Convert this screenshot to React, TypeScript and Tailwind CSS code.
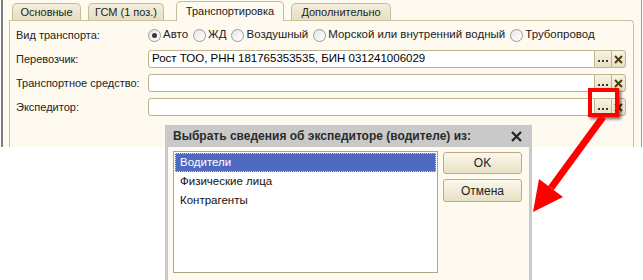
import { ReactNode } from "react";

type FieldProps = { value?: string };

function Radio({ label, checked }: { label: string; checked?: boolean }) {
  return (
    <div className="flex items-center mr-[5px] whitespace-nowrap text-[11.5px]">
      <span className="w-[13px] h-[13px] rounded-full border border-[#9a9a9a] bg-gradient-to-br from-[#e6e6e6] to-white flex items-center justify-center mr-[2px]">
        {checked && <span className="w-[5px] h-[5px] rounded-full bg-[#3a3a3a]" />}
      </span>
      <span>{label}</span>
    </div>
  );
}

function Dots() {
  return (
    <svg width="11" height="3" viewBox="0 0 11 3">
      <rect x="0" y="0" width="2" height="2" fill="#3d3a1a" />
      <rect x="4" y="0" width="2" height="2" fill="#3d3a1a" />
      <rect x="8" y="0" width="2" height="2" fill="#3d3a1a" />
    </svg>
  );
}

function Field({ value }: FieldProps) {
  return (
    <div className="flex h-[18px] w-[478px]">
      <div className="flex-1 bg-white border border-[#bdb48f] rounded-l-[3px] pl-[3px] flex items-center text-[11.5px] text-black leading-none whitespace-nowrap">
        {value}
      </div>
      <div className="w-[16px] border-y border-[#bdb48f] bg-gradient-to-b from-[#f7f3e3] to-[#e8e0c2] flex items-end justify-center pb-[4px]">
        <Dots />
      </div>
      <div className="w-[15px] border border-[#bdb48f] rounded-r-[3px] bg-gradient-to-b from-[#f7f3e3] to-[#e8e0c2] flex items-center justify-center">
        <svg width="9" height="9" viewBox="0 0 9 9">
          <path d="M1 1 L8 8 M8 1 L1 8" stroke="#4a3c08" strokeWidth="2" />
        </svg>
      </div>
    </div>
  );
}

function Row({ label, children }: { label: string; children: ReactNode }) {
  return (
    <div className="flex items-center h-[18px]">
      <div className="w-[132px] shrink-0 whitespace-nowrap">{label}</div>
      {children}
    </div>
  );
}

function Tab({ label, active, w }: { label: string; active?: boolean; w: string }) {
  return active ? (
    <div
      className={`${w} h-[20px] -mb-px relative z-10 bg-[#fefaef] border border-b-0 border-[#c5bc98] rounded-t-[5px] flex items-center justify-center pb-[1px]`}
    >
      {label}
    </div>
  ) : (
    <div
      className={`${w} h-[17px] bg-gradient-to-b from-[#f3eedb] to-[#e6dfc3] border border-b-0 border-[#c5bc98] rounded-t-[5px] flex items-center justify-center`}
    >
      {label}
    </div>
  );
}

export default function App() {
  return (
    <div className="relative w-[643px] h-[280px] bg-white overflow-hidden font-['Liberation_Sans',Arial,sans-serif] text-[11px] text-[#222]">
      {/* main form */}
      <div className="ml-px w-[641px] h-[147px] bg-[#fefaef] border-l-2 border-l-[#7c7c7c] border-r border-r-[#9c9c9c] pl-[6px] pr-[7px] pt-[2px] flex flex-col">
        <div className="flex items-end h-[18px] pl-[3px]">
          <Tab label="Основные" w="w-[69px]" />
          <div className="w-[7px]" />
          <Tab label="ГСМ (1 поз.)" w="w-[76px]" />
          <div className="w-[12px]" />
          <Tab label="Транспортировка" active w="w-[108px]" />
          <div className="w-[7px]" />
          <Tab label="Дополнительно" w="w-[100px]" />
        </div>
        <div className="flex-1 border border-b-0 border-[#cbc2a0] rounded-tr-[4px] pl-[6px] pt-[5px] flex flex-col gap-[6px]">
          <Row label="Вид транспорта:">
            <div className="flex items-center">
              <Radio label="Авто" checked />
              <Radio label="ЖД" />
              <Radio label="Воздушный" />
              <Radio label="Морской или внутренний водный" />
              <Radio label="Трубопровод" />
            </div>
          </Row>
          <Row label="Перевозчик:">
            <Field value="Рост ТОО, РНН 181765353535, БИН 031241006029" />
          </Row>
          <Row label="Транспортное средство:">
            <Field />
          </Row>
          <Row label="Экспедитор:">
            <Field />
          </Row>
        </div>
      </div>

      {/* red highlight around the ... button */}
      <div className="absolute left-[588px] top-[88px] w-[31px] h-[29px] border-4 border-[#ff0000] shadow-[2px_2px_3px_rgba(0,0,0,0.6)]" />

      {/* arrow */}
      <svg className="absolute left-0 top-0" width="643" height="280" viewBox="0 0 643 280">
        <line x1="603" y1="117" x2="551" y2="188" stroke="#ff0000" strokeWidth="7" />
        <polygon points="533,212 539,179 563,197" fill="#ff0000" />
      </svg>

      {/* dialog */}
      <div className="absolute left-[165px] top-[125px] w-[367px] h-[158px] bg-[#c9c9c9] px-[3px] flex flex-col">
        <div className="h-[22px] flex items-center justify-between pl-[5px] pr-[7px]">
          <span className="font-bold text-[12px] text-[#2b2b2b]">
            Выбрать сведения об экспедиторе (водителе) из:
          </span>
          <svg width="11" height="11" viewBox="0 0 11 11">
            <path d="M1 1 L10 10 M10 1 L1 10" stroke="#222" strokeWidth="2.2" />
          </svg>
        </div>
        <div className="flex-1 bg-[#fefaef] flex pl-[5px] pt-[4px] gap-[5px] text-[11.5px]">
          <div className="w-[265px] h-[122px] bg-white border border-[#aca77f] p-px">
            <div className="h-[19px] bg-[#4f69c2] border border-dotted border-[#c9d0ee] text-white pl-[4px] flex items-center">
              Водители
            </div>
            <div className="h-[19px] pl-[5px] flex items-center text-[#1a1010]">Физические лица</div>
            <div className="h-[19px] pl-[5px] flex items-center text-[#101010]">Контрагенты</div>
          </div>
          <div className="flex flex-col gap-[5px] pt-px">
            <button className="w-[79px] h-[22px] rounded-[3px] border border-[#b8ad85] bg-gradient-to-b from-[#fbf8ec] to-[#e9e1c4] text-[#222] text-[12px]">
              OK
            </button>
            <button className="w-[79px] h-[23px] rounded-[3px] border border-[#b8ad85] bg-gradient-to-b from-[#fbf8ec] to-[#e9e1c4] text-[#222] text-[12px]">
              Отмена
            </button>
          </div>
        </div>
      </div>
    </div>
  );
}
